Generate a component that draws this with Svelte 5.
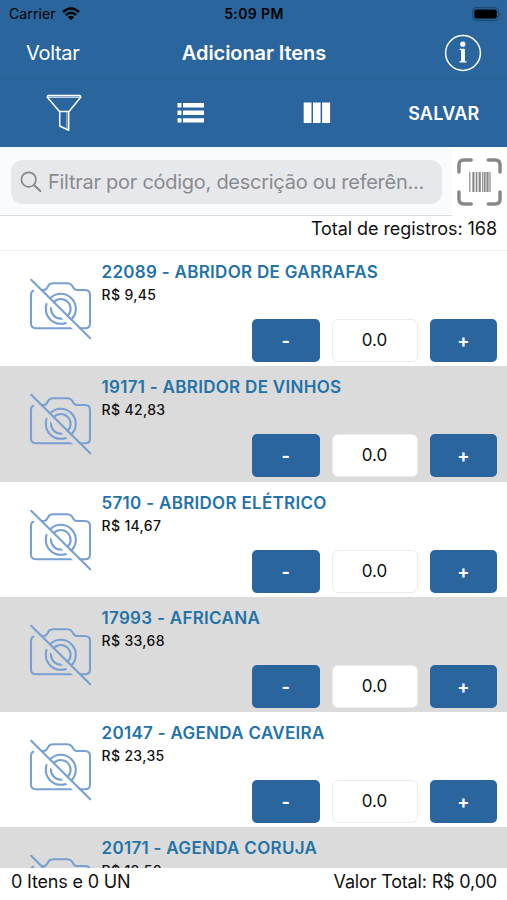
<script lang="ts">
	type Item = { code: string; name: string; price: string };

	const items: Item[] = [
		{ code: '22089', name: 'ABRIDOR DE GARRAFAS', price: '9,45' },
		{ code: '19171', name: 'ABRIDOR DE VINHOS', price: '42,83' },
		{ code: '5710', name: 'ABRIDOR ELÉTRICO', price: '14,67' },
		{ code: '17993', name: 'AFRICANA', price: '33,68' },
		{ code: '20147', name: 'AGENDA CAVEIRA', price: '23,35' },
		{ code: '20171', name: 'AGENDA CORUJA', price: '18,50' }
	];

	let quantities: number[] = $state(items.map(() => 0));

	function change(i: number, step: number) {
		quantities[i] = Math.max(0, quantities[i] + step);
	}
</script>

<div class="screen">
	<div class="status">
		<div class="carrier">
			<span>Carrier</span>
			<svg width="18" height="14" viewBox="0 0 18 14" fill="none" stroke="#000" aria-hidden="true">
				<path d="M1 5Q9-2 17 5M3.8 8Q9 3.5 14.2 8" stroke-width="2.5" />
				<path d="M5.8 10Q9 7.4 12.2 10L9 13.3Z" fill="#000" stroke="none" />
			</svg>
		</div>
		<span class="time">5:09 PM</span>
		<svg class="battery" width="30" height="14" viewBox="0 0 30 14" aria-hidden="true">
			<rect x=".7" y=".7" width="25.6" height="12.6" rx="3.6" fill="none" stroke="#1d4a75" stroke-width="1.2" />
			<rect x="2.3" y="2.5" width="22.4" height="9" rx="2" />
			<path d="M27.7 5Q29.6 7 27.7 9Z" fill="#1d4a75" />
		</svg>
	</div>

	<header class="navbar">
		<button class="back">Voltar</button>
		<h1>Adicionar Itens</h1>
		<button class="info" aria-label="Info">
			<svg width="38" height="38" viewBox="0 0 38 38" fill="none" stroke="#fff">
				<circle cx="19" cy="19" r="17.4" stroke-width="1.5" />
				<circle cx="18.8" cy="10.2" r="2.6" fill="#fff" stroke="none" />
				<path d="M15.6 15.4H19.5V27.8" stroke-width="1.3" />
				<path d="M17.1 15H20.9V28H17.1ZM15.4 27.3H22.6V28.6H15.4Z" fill="#fff" stroke="none" />
			</svg>
		</button>
	</header>

	<nav class="toolbar">
		<button aria-label="Filtrar">
			<svg width="36" height="38" viewBox="0 0 36 38" fill="none" stroke="#fff" stroke-width="1.5" stroke-linejoin="round">
				<path d="M2.5 1.5H33.5Q35 1.6 34.5 3.5L23 17.5H13.5L1.5 3.5Q1 1.6 2.5 1.5Z" />
				<path d="M1.5 3.2H34.5" stroke-width="1" />
				<path d="M13.7 17.5V32L22.7 36.3V17.5" />
				<path d="M20.9 18V35" stroke-width=".7" />
			</svg>
		</button>
		<button aria-label="Lista">
			<svg width="28" height="20" viewBox="0 0 28 20" fill="#fff">
				<path d="M.5 0h4v4.5h-4zM6 0h21v4.5H6zM.5 7.6h4v4.5h-4zM6 7.6h21v4.5H6zM.5 15.2h4v4.3h-4zM6 15.2h21v4.3H6z" />
			</svg>
		</button>
		<button aria-label="Colunas">
			<svg width="28" height="22" viewBox="0 0 28 22" fill="#fff">
				<path d="M.7.5h7.8V21H.7zM10 .5h7.6V21H10zM19.1.5h8V21h-8z" />
			</svg>
		</button>
		<button class="save">SALVAR</button>
	</nav>

	<div class="search">
		<div class="search-bar">
			<label class="field">
				<svg width="22" height="22" viewBox="0 0 22 22" fill="none" stroke="#85868a" stroke-width="1.7" stroke-linecap="round">
					<circle cx="8.7" cy="8.6" r="7.3" />
					<path d="M14 14L20.3 20" stroke-width="2" />
				</svg>
				<span>Filtrar por código, descrição ou referên...</span>
			</label>
		</div>
		<button class="scan" aria-label="Ler código de barras">
			<svg width="45" height="48" viewBox="0 0 46 48" preserveAspectRatio="none" fill="none" stroke="#87888a">
				<path d="M2 14V7Q2 2 7 2H14.5M32 2H39Q44 2 44 7V14M44 34V41Q44 46 39 46H32M14.5 46H7Q2 46 2 41V34" stroke-width="3.6" stroke-linecap="round" />
				<path d="M13.1 14V34M26.3 14V34M33.7 14V34" stroke-width="1.2" />
				<path d="M16.8 14V34M23.2 14V34M31.2 14V34" stroke-width="2.2" />
				<path d="M20 14V34M28.4 14V34" stroke-width="1.7" />
			</svg>
		</button>
	</div>
	<div class="count">Total de registros: 168</div>

	<main>
		{#each items as item, i}
			<article class="row" class:alt={i % 2 === 1}>
				<svg class="photo" width="64" height="62" viewBox="0 0 64 62" fill="none" stroke-linecap="round" aria-hidden="true">
					<g stroke="#78a0d1" stroke-width="2.1">
						<path d="M2 46V17Q2 12 7 12H14.5Q17 12 18 10L19.5 7.5Q20.8 5.2 24 5.2H38.5Q41.5 5.2 43 7.5L44.5 10Q45.5 12 48 12H56Q61 12 61 17V45.5Q61 50.3 56 50.3H7Q2 50.3 2 45.5" />
						<circle cx="31.8" cy="30.8" r="15" />
						<circle cx="31.8" cy="30.8" r="9.8" />
					</g>
					<path class="gap" d="M0 4L59.5 63.5" stroke-width="4.6" />
					<path d="M2.2 1.8L61.2 60.3" stroke="#78a0d1" stroke-width="2.1" />
				</svg>
				<div class="details">
					<h2>{item.code} - {item.name}</h2>
					<p>R$ {item.price}</p>
					<div class="stepper">
						<button class="step" onclick={() => change(i, -1)}>-</button>
						<span class="qty">{quantities[i].toFixed(1)}</span>
						<button class="step" onclick={() => change(i, 1)}>+</button>
					</div>
				</div>
			</article>
		{/each}
	</main>

	<footer>
		<span>0 Itens e 0 UN</span>
		<span>Valor Total: R$ 0,00</span>
	</footer>
</div>

<style>
	:global(body) {
		background: #fff;
	}
	.screen {
		display: flex;
		flex-direction: column;
		width: 507px;
		height: 900px;
		overflow: hidden;
		font-family: Inter, 'Liberation Sans', sans-serif;
		color: #111;
		white-space: nowrap;
	}
	button {
		display: flex;
		align-items: center;
		justify-content: center;
		padding: 0;
		border: 0;
		background: none;
		font: inherit;
		color: #fff;
	}
	svg {
		display: block;
		flex: none;
	}
	h1,
	h2,
	p {
		margin: 0;
	}

	.status {
		display: grid;
		grid-template-columns: 1fr auto 1fr;
		align-items: center;
		height: 27px;
		padding: 0 5px 0 9px;
		background: #2a659d;
		color: #000;
		font-size: 14px;
		box-sizing: border-box;
	}
	.carrier {
		display: flex;
		align-items: center;
		gap: 6px;
		letter-spacing: 0.1px;
	}
	.time {
		padding-right: 3px;
		font-weight: 600;
		letter-spacing: 0.4px;
	}
	.battery {
		justify-self: end;
	}

	.navbar {
		display: grid;
		grid-template-columns: 1fr auto 1fr;
		align-items: center;
		height: 52px;
		padding: 0 25px 0 26px;
		background: #2a659d;
		border-bottom: 1px solid #285f94;
		box-sizing: border-box;
		color: #fff;
	}
	.back {
		justify-self: start;
		font-size: 20px;
		letter-spacing: -0.3px;
	}
	h1 {
		font-size: 20px;
		font-weight: 600;
		letter-spacing: -0.08px;
	}
	.info {
		justify-self: end;
	}

	.toolbar {
		display: grid;
		grid-template-columns: repeat(4, 1fr);
		height: 68px;
		padding-left: 1px;
		background: #2a659d;
	}
	.save {
		font-size: 18px;
		font-weight: 600;
		letter-spacing: 0.2px;
	}

	.search {
		display: flex;
		height: 69px;
	}
	.search-bar {
		width: 452px;
		padding: 13px 10px 0 11px;
		box-sizing: border-box;
		background: #f9fbfd;
		border-bottom: 1px solid #dcdcdd;
	}
	.field {
		display: flex;
		align-items: center;
		gap: 6px;
		height: 43.5px;
		padding-left: 9px;
		border-radius: 12px;
		background: #e7e8eb;
		color: #8a8b8f;
		font-size: 20px;
		letter-spacing: -0.27px;
	}
	.scan {
		align-items: flex-start;
		width: 55px;
		padding-top: 11px;
	}
	.count {
		height: 35px;
		padding-right: 10px;
		border-bottom: 1px solid #f0f0f0;
		box-sizing: border-box;
		line-height: 25px;
		font-size: 18px;
		letter-spacing: -0.06px;
		text-align: right;
	}

	main {
		flex: 1;
		min-height: 0;
		overflow: hidden;
	}
	.row {
		--row: #fff;
		display: flex;
		height: 115.25px;
		padding: 0 10px 0 29px;
		box-sizing: border-box;
		background: var(--row);
	}
	.row.alt {
		--row: #dbdbdb;
	}
	.photo {
		margin-top: 27px;
	}
	.gap {
		stroke: var(--row);
	}
	.details {
		flex: 1;
		padding: 10px 0 0 8.5px;
	}
	h2 {
		line-height: 22px;
		font-size: 17px;
		font-weight: 600;
		letter-spacing: 0.3px;
		color: #2373a8;
	}
	p {
		line-height: 24px;
		font-size: 14px;
		font-weight: 500;
		letter-spacing: 0.35px;
	}
	.stepper {
		display: flex;
		justify-content: flex-end;
		gap: 12px;
		margin-top: 12px;
	}
	.step {
		width: 67.5px;
		height: 43px;
		border-radius: 5px;
		background: #2a659d;
		font-size: 18px;
		font-weight: 700;
	}
	.qty {
		width: 86px;
		height: 43px;
		border: 1px solid #ececec;
		border-radius: 6px;
		box-sizing: border-box;
		background: #fff;
		line-height: 41px;
		font-size: 17px;
		text-align: center;
	}

	footer {
		display: flex;
		justify-content: space-between;
		height: 32px;
		padding: 0 10px 0 11px;
		line-height: 28px;
		font-size: 18px;
		letter-spacing: -0.17px;
	}
</style>
